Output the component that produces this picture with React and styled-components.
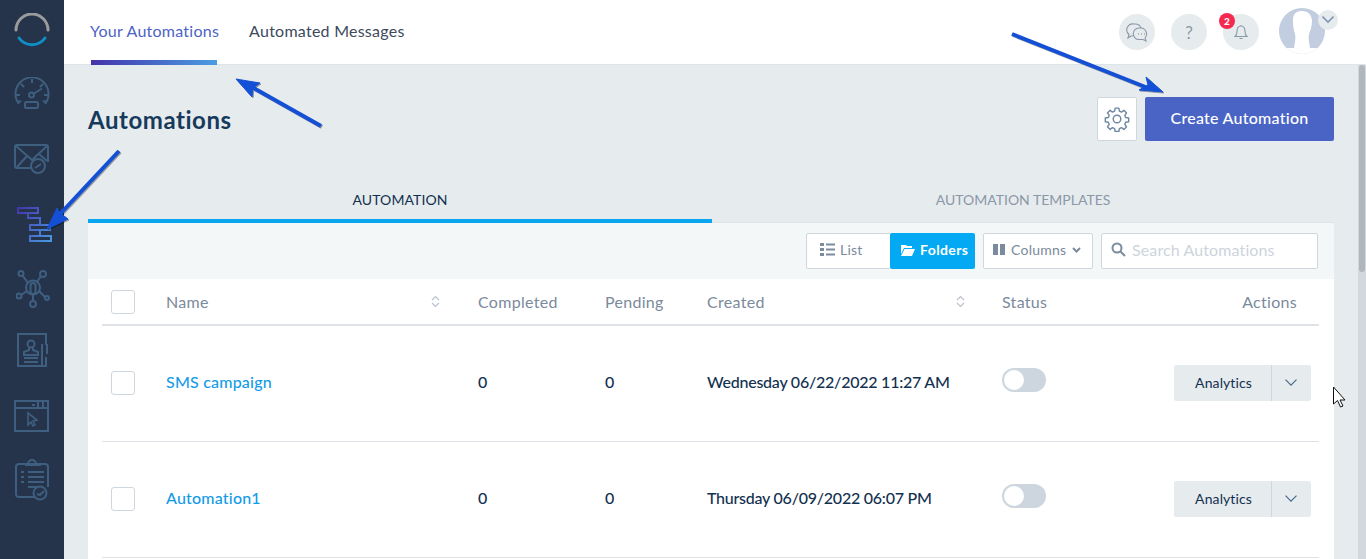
import React from "react";
import styled, { createGlobalStyle } from "styled-components";

const Global = createGlobalStyle`
  html, body { margin: 0; padding: 0; height: 559px; overflow: hidden; background: #e6ebee; }
  * { box-sizing: border-box; }
  body { font-family: "Lato", "Open Sans", sans-serif; }
`;

const Shell = styled.div`
  position: relative; display: flex; width: 1366px; height: 559px; overflow: hidden;
`;
const Side = styled.aside`
  width: 64px; flex: none; background: #25344a; display: flex; flex-direction: column; align-items: center;
  padding-top: 13px;
`;
const NavIcon = styled.div`
  height: ${p => p.$h}px; display: flex; justify-content: center; align-items: flex-start; width: 100%;
  padding-left: ${p => p.$dx || 0}px;
  svg { display: block; }
`;
const Column = styled.div`flex: 1; display: flex; flex-direction: column; min-width: 0;`;
const Header = styled.header`
  height: 65px; flex: none; background: #fff; border-bottom: 1px solid #dfe4e8; display: flex; align-items: stretch;
  padding-left: 26px; padding-right: 41px;
`;
const TopTab = styled.div`
  position: relative; margin-right: 30px; display: flex; align-items: flex-start; padding-top: 21px; font-size: 16px; line-height: 20px; letter-spacing: .25px;
  color: ${p => p.$active ? "#4d63c4" : "#3c4a5c"};
  ${p => p.$active && `&::after { content: ""; position: absolute; left: 1px; right: 2px; bottom: -1px; height: 5px; background: linear-gradient(90deg,#4433ab,#4a9de2); }`}
`;
const HeadRight = styled.div`margin-left: auto; display: flex; align-items: flex-start; gap: 16px; padding-top: 14px;`;
const RoundBtn = styled.div`
  position: relative; width: 36px; height: 36px; border-radius: 50%; background: #e6ebee; color: #8b98a7; display: flex; align-items: center; justify-content: center; font-size: 17px;
`;
const Badge = styled.span`
  position: absolute; top: -1px; left: -4px; width: 16px; height: 16px; border-radius: 50%; background: #f5294f; color: #fff; font-size: 10px; font-weight: 900; display: flex; align-items: center; justify-content: center;
`;
const Avatar = styled.div`position: relative; width: 46px; height: 46px; margin-left: 4px; margin-top: -6px; svg { display:block; }`;
const AvatarChevron = styled.div`
  position: absolute; top: 2px; right: -13px; width: 20px; height: 20px; border-radius: 50%; background: #e6ebee; display:flex; align-items:center; justify-content:center;
`;
const Body = styled.div`flex: 1; display: flex; min-height: 0;`;
const Main = styled.main`flex: 1; padding: 0 24px; min-width: 0; overflow: hidden;`;
const TitleRow = styled.div`height: 115px; display: flex; justify-content: space-between; padding-top: 32px;`;
const Title = styled.h1`margin: 7px 0 0; font-size: 24px; line-height: 32px; font-weight: 700; color: #173a5c; letter-spacing: .55px;`;
const TitleActions = styled.div`display: flex; gap: 8px; align-items: flex-start;`;
const GearBtn = styled.div`width: 40px; height: 44px; background: #fff; border: 1px solid #cfd6dd; border-radius: 2px; display:flex; align-items:center; justify-content:center;`;
const Primary = styled.button`
  width: 189px; height: 44px; padding: 0 0 4px; background: #4a64c6; color: #fff; border: 0; border-radius: 2px; font: 500 16px "Lato", sans-serif; letter-spacing: .25px;
`;
const Tabs = styled.div`display: grid; grid-template-columns: 624px 622px; height: 43px;`;
const Tab = styled.div`
  display: flex; justify-content: center; align-items: flex-start; padding-top: 11px; font-size: 14px; line-height: 18px; letter-spacing: ${p => p.$active ? ".1px" : "0"};
  color: ${p => p.$active ? "#12304f" : "#8b98a7"};
  border-bottom: ${p => p.$active ? 4 : 1}px solid ${p => p.$active ? "#09a6ef" : "#dfe4e8"};
`;
const Toolbar = styled.div`
  height: 56px; background: #f4f7f8; display: flex; justify-content: flex-end; align-items: center; gap: 8px; padding: 0 16px 0 0;
`;
const Segment = styled.div`display: flex; height: 36px;`;
const SegBtn = styled.div`
  display: flex; align-items: center; gap: 5px; height: 36px; font-size: 14px; border-radius: 2px; letter-spacing: .2px; padding-bottom: 3px;
  ${p => p.$active
    ? `width: 85px; padding-left: 11px; background: #04a9f4; color: #fff; font-weight: 700; margin-left: -1px; letter-spacing: .4px;`
    : `width: 85px; padding-left: 13px; background: #fff; color: #7b8a9c; border: 1px solid #cfd6dd;`}
`;
const ColumnsBtn = styled.div`
  width: 110px; height: 36px; display:flex; align-items:center; gap: 6px; padding: 0 0 3px 9px; background: #fff; border: 1px solid #cfd6dd; border-radius: 2px; color: #7b8a9c; font-size: 14px; letter-spacing: .25px;
`;
const Search = styled.div`
  width: 217px; height: 36px; display:flex; align-items:center; gap: 6px; padding: 0 0 3px 9px; background:#fff; border:1px solid #cfd6dd; border-radius:2px; color:#cdd4db; font-size: 16px; letter-spacing: .12px;
`;
const Card = styled.div`background: #fff; padding: 0 15px 0 14px; height: 300px;`;
const Row = styled.div`
  display: grid; grid-template-columns: 64px 312px 127px 102px 295px 1fr auto; align-items: center;
  height: ${p => p.$head ? 47 : 116}px;
  padding-bottom: ${p => p.$head ? 0 : 2}px;
  border-bottom: ${p => p.$head ? 2 : 1}px solid #dfe2e6;
  color: ${p => p.$head ? "#7b8a9c" : "#12304f"};
  font-size: 16px; letter-spacing: ${p => p.$head ? ".3px" : "0"};
`;
const Check = styled.div`width: 24px; height: 24px; margin-left: 9px; border: 1px solid #cfd6dd; border-radius: 3px; background: #fff;`;
const SortCell = styled.div`display:flex; justify-content: space-between; align-items:center; padding-right: ${p=>p.$pad}px;`;
const NameLink = styled.span`color: #149be8; font-weight: 500; letter-spacing: .2px; margin-bottom: 2px;`;
const Strong = styled.span`color:#12304f; font-weight: 500; letter-spacing: ${p => p.$tight ? "-.24px" : ".2px"}; margin-bottom: 2px;`;
const Toggle = styled.div`
  position: relative; width: 44px; height: 24px; border-radius: 12px; background: #cdd6df; margin-top: -6px;
  &::after { content:""; position:absolute; left: 2px; top: 2px; width: 20px; height: 20px; border-radius: 50%; background:#fff; }
`;
const ActionsHead = styled.div`padding-right: 22px; text-align: right;`;
const Actions = styled.div`display:flex; margin-right: 8px; height: 36px; background:#e6ebee; border-radius: 2px; color:#12304f; font-size: 14px; letter-spacing: .1px;`;
const ActMain = styled.div`width: 98px; padding-left: 2px; display:flex; align-items:center; justify-content:center; border-right: 1px solid #cfd6dd;`;
const ActCaret = styled.div`width: 39px; padding-right: 2px; display:flex; align-items:center; justify-content:center;`;
const ScrollTrack = styled.div`width: 8px; flex: none; background: #d2d8de; padding-left: 1px;`;
const ScrollThumb = styled.div`width: 6px; height: 207px; background: #b0b7bc; border-radius: 3px;`;
const Overlay = styled.svg`position: absolute; left: 0; top: 0; pointer-events: none;`;
const ArrowGroup = styled.g`filter: drop-shadow(1px 1px 0.5px rgba(0,0,0,.35));`;

const S = { fill: "none", stroke: "#3f5f80", strokeWidth: 2 };

const Logo = () => (
  <svg width="36" height="36" viewBox="0 0 36 36" fill="none" strokeWidth="3">
    <path d="M2 17 A16 16 0 0 1 34 17" stroke="#9b9b9b" strokeLinecap="round"/>
    <path d="M5 25 A16 16 0 0 0 31 25" stroke="#0f8fc6" strokeLinecap="round"/>
  </svg>
);
const Gauge = () => (
  <svg width="36" height="34" viewBox="0 0 36 34" {...S}>
    <path d="M5 27 A16.5 16.5 0 1 1 31 27"/>
    <path d="M18 2v4M7 7l3 3M29 7l-3 3M2 18h4M30 18h4M4 25l3-1M32 25l-3-1"/>
    <circle cx="17.500" cy="18" r="2.500"/><path d="M20 16.500l8-5"/>
    <rect x="11" y="25" width="13" height="6" rx="1.500"/>
  </svg>
);
const Mail = () => (
  <svg width="36" height="32" viewBox="0 0 36 32" {...S}>
    <path d="M20 24H3a2 2 0 0 1-2-2V3a2 2 0 0 1 2-2h29a2 2 0 0 1 2 2v15"/>
    <path d="M2 2l16 14L33 2M3 23l10-11M33 17l-8-7"/>
    <circle cx="24" cy="22" r="7" fill="#25344a"/><path d="M21 24l6-4"/>
  </svg>
);
const Flow = () => (
  <svg width="36" height="36" viewBox="0 0 36 36" fill="none" strokeWidth="2">
    <defs><linearGradient id="fg" gradientUnits="userSpaceOnUse" x1="0" x2="36" y1="0" y2="36"><stop offset="0" stopColor="#4433ab"/><stop offset="1" stopColor="#4a9de2"/></linearGradient></defs>
    <g stroke="url(#fg)">
      <rect x="1" y="1" width="20" height="5"/><rect x="13" y="18" width="20" height="5"/><rect x="13" y="29" width="21" height="5"/>
      <path d="M11 6v5h12v7M23 23v6"/>
    </g>
  </svg>
);
const Network = () => (
  <svg width="36" height="38" viewBox="0 0 36 38" {...S}>
    <circle cx="17" cy="17.500" r="7"/><rect x="14.500" y="13" width="5" height="11" rx="2.500"/>
    <circle cx="5" cy="3.500" r="2.500"/><circle cx="27" cy="4" r="3"/>
    <circle cx="3" cy="26" r="2.500"/><circle cx="17" cy="34" r="3"/><circle cx="31" cy="28" r="2"/>
    <path d="M7 6l5 7M25 6l-4 6M5 25l6-4M17 25v6M23 21l6 6"/>
  </svg>
);
const Contact = () => (
  <svg width="32" height="36" viewBox="0 0 32 36" {...S}>
    <path d="M29 12V1H1v32h24V11"/><path d="M29 12h1v9M29 24v9h-4" />
    <circle cx="14" cy="11" r="3.500"/><path d="M12 15v2l-5 2v3h14v-3l-5-2v-2"/><path d="M7 25h14M7 29h14"/>
  </svg>
);
const Browser = () => (
  <svg width="36" height="33" viewBox="0 0 36 33" {...S}>
    <rect x="1" y="1" width="33" height="30"/><path d="M1 8h33"/>
    <path d="M18 5h3M24 2v5M29 2v5" />
    <path d="M14 13l9 7-4 1 2 4-2 1-2-4-3 3z" strokeWidth="1.600"/>
  </svg>
);
const Clip = () => (
  <svg width="36" height="46" viewBox="0 0 36 46" {...S}>
    <path d="M25 41H5a3 3 0 0 1-3-3V11a3 3 0 0 1 3-3h26a3 3 0 0 1 3 3v20"/>
    <path d="M11 9h16M14 8a4 4 0 1 1 8 0"/>
    <path d="M7 16h3M14 16h16M7 21h3M14 21h16M7 26h3M14 26h16M14 31h12"/>
    <circle cx="26" cy="37" r="6.500" fill="#25344a"/><path d="M23 38l3 1 4-4"/>
  </svg>
);
const Sort = () => (
  <svg width="9" height="13" viewBox="0 0 9 13" fill="none" stroke="#b9c2cc" strokeWidth="1.200">
    <path d="M1 5l3.500-3.500L8 5M1 8l3.500 3.500L8 8"/>
  </svg>
);
const Chevron = ({ size = 12, color = "#46688c", weight = 1.2 }) => (
  <svg width={size} height={size * 0.6} viewBox="0 0 12 7" fill="none" stroke={color} strokeWidth={weight}><path d="M.5.5L6 6l5.500-5.500"/></svg>
);

const rows = [
  ["SMS campaign", "Wednesday 06/22/2022 11:27 AM"],
  ["Automation1", "Thursday 06/09/2022 06:07 PM"],
];

export default function App() {
  return (
    <Shell>
      <Global />
      <Side>
        <NavIcon $h={64}><Logo /></NavIcon>
        <NavIcon $h={67}><Gauge /></NavIcon>
        <NavIcon $h={63}><Mail /></NavIcon>
        <NavIcon $h={63} $dx={6}><Flow /></NavIcon>
        <NavIcon $h={63} $dx={3}><Network /></NavIcon>
        <NavIcon $h={67} $dx={2}><Contact /></NavIcon>
        <NavIcon $h={56}><Browser /></NavIcon>
        <NavIcon $h={50}><Clip /></NavIcon>
      </Side>
      <Column>
        <Header>
          <TopTab $active>Your Automations</TopTab>
          <TopTab>Automated Messages</TopTab>
          <HeadRight>
            <RoundBtn>
              <svg width="22" height="20" viewBox="0 0 22 20" fill="none" stroke="#8b98a7" strokeWidth="1.100">
                <path d="M7 14H5l-3 2 1-3.500A6 6 0 0 1 8 2h1a6 6 0 0 1 6 4"/>
                <path d="M13 6h2a6 6 0 0 1 4 10l1 3-3-1.500h-4a5.500 5.500 0 0 1 0-11.500z"/>
                <path d="M12 12h.8M15 12h.8M18 12h.8" strokeWidth="1.400"/>
              </svg>
            </RoundBtn>
            <RoundBtn>?</RoundBtn>
            <RoundBtn>
              <Badge>2</Badge>
              <svg width="14" height="16" viewBox="0 0 14 16" fill="none" stroke="#8b98a7" strokeWidth="1.100">
                <path d="M1 12.500h12c-1.500-1-2-2.500-2-5C11 4 9.500 2 7 2S3 4 3 7.500c0 2.500-.5 4-2 5zM5.500 14.500h3M7 2V1"/>
              </svg>
            </RoundBtn>
            <Avatar>
              <svg width="46" height="46" viewBox="0 0 46 46">
                <defs><clipPath id="av"><circle cx="23" cy="23" r="23"/></clipPath></defs>
                <g clipPath="url(#av)">
                  <rect width="46" height="46" fill="#c2cde0"/>
                  <path d="M14 12C14 5 18 3 23 3c6 0 10 4 10 10 0 6-2 10-3 13-1 4 0 8 1 14H15c1-6 2-10 1-14-1-3-2-7-2-14z" fill="#fff"/>
                  <rect y="40" width="46" height="6" fill="#fff"/>
                </g>
              </svg>
              <AvatarChevron><Chevron size={12} color="#7f97b5" weight={1.5} /></AvatarChevron>
            </Avatar>
          </HeadRight>
        </Header>
        <Body>
          <Main>
            <TitleRow>
              <Title>Automations</Title>
              <TitleActions>
                <GearBtn>
                  <svg width="26" height="26" viewBox="0 0 24 24" fill="none" stroke="#6d87a3" strokeWidth="1.300" strokeLinejoin="round">
                    <circle cx="12" cy="12" r="3.500"/>
                    <path d="M10.300 2h3.400l.5 2.800 1.900.8 2.300-1.600 2.400 2.400-1.600 2.300.8 1.900 2.800.5v3.400l-2.800.5-.8 1.900 1.600 2.300-2.400 2.400-2.300-1.600-1.900.8-.5 2.800h-3.400l-.5-2.800-1.900-.8-2.300 1.600-2.400-2.400 1.600-2.300-.8-1.900-2.800-.5v-3.400l2.800-.5.8-1.900-1.600-2.300 2.400-2.400 2.300 1.600 1.900-.8z"/>
                  </svg>
                </GearBtn>
                <Primary>Create Automation</Primary>
              </TitleActions>
            </TitleRow>
            <Tabs>
              <Tab $active>AUTOMATION</Tab>
              <Tab>AUTOMATION TEMPLATES</Tab>
            </Tabs>
            <Toolbar>
              <Segment>
                <SegBtn>
                  <svg width="15" height="13" viewBox="0 0 15 13" fill="#7b8a9c"><rect y="0" width="4" height="3"/><rect y="5" width="4" height="3"/><rect y="10" width="4" height="3"/><rect x="6" y=".5" width="9" height="2"/><rect x="6" y="5.500" width="9" height="2"/><rect x="6" y="10.500" width="9" height="2"/></svg>
                  List
                </SegBtn>
                <SegBtn $active>
                  <svg width="14" height="12" viewBox="0 0 14 12" fill="#fff"><path d="M0 1h5l1 1h5v2H3L0 10zM3.500 5H14l-3 7H0z"/></svg>
                  Folders
                </SegBtn>
              </Segment>
              <ColumnsBtn>
                <svg width="12" height="11" viewBox="0 0 12 11" fill="#7b8a9c"><rect width="5" height="11"/><rect x="7" width="5" height="11"/></svg>
                Columns
                <svg width="9" height="6" viewBox="0 0 9 6" fill="none" stroke="#7b8a9c" strokeWidth="2"><path d="M1 1l3.500 3.500L8 1"/></svg>
              </ColumnsBtn>
              <Search>
                <svg width="15" height="15" viewBox="0 0 15 15" fill="none" stroke="#7b8a9c" strokeWidth="2"><circle cx="6" cy="6" r="4.500"/><path d="M9.500 9.500L14 14"/></svg>
                Search Automations
              </Search>
            </Toolbar>
            <Card>
              <Row $head>
                <Check />
                <SortCell $pad={38}>Name<Sort /></SortCell>
                <span>Completed</span>
                <span>Pending</span>
                <SortCell $pad={37}>Created<Sort /></SortCell>
                <span>Status</span>
                <ActionsHead>Actions</ActionsHead>
              </Row>
              {rows.map(([name, date]) => (
                <Row key={name}>
                  <Check />
                  <NameLink>{name}</NameLink>
                  <Strong>0</Strong>
                  <Strong>0</Strong>
                  <Strong $tight>{date}</Strong>
                  <Toggle />
                  <Actions>
                    <ActMain>Analytics</ActMain>
                    <ActCaret><Chevron /></ActCaret>
                  </Actions>
                </Row>
              ))}
            </Card>
          </Main>
          <ScrollTrack><ScrollThumb /></ScrollTrack>
        </Body>
      </Column>
      <Overlay width="1366" height="559" viewBox="0 0 1366 559">
        <ArrowGroup fill="#1450d6" stroke="#1450d6">
          <path d="M1012 34L1148 88" strokeWidth="4" fill="none"/>
          <path d="M1163 92L1146 77 1148 85 1139 90z" strokeWidth="1"/>
          <path d="M321 126L250 86" strokeWidth="4" fill="none"/>
          <path d="M236 79L260 83 253 88 252 97z" strokeWidth="1"/>
          <path d="M119 151L60 214" strokeWidth="4" fill="none"/>
          <path d="M47 229L57 208 60 213 68 219z" strokeWidth="1"/>
        </ArrowGroup>
        <path d="M1333.500 387v17l4-3.500 3 6.500 2.500-1-3-6h5z" fill="#fff" stroke="#111" strokeWidth="1"/>
      </Overlay>
    </Shell>
  );
}
